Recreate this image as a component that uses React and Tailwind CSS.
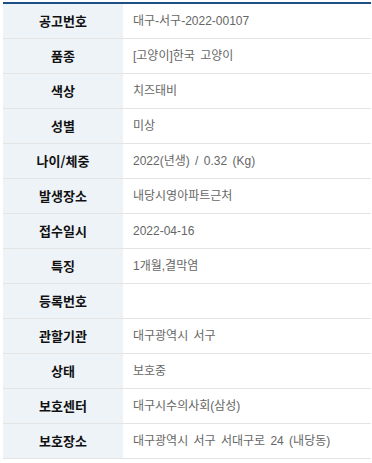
const rows = [
  ['공고번호', '대구-서구-2022-00107'],
  ['품종', '[고양이]한국 고양이'],
  ['색상', '치즈태비'],
  ['성별', '미상'],
  ['나이/체중', '2022(년생) / 0.32 (Kg)'],
  ['발생장소', '내당시영아파트근처'],
  ['접수일시', '2022-04-16'],
  ['특징', '1개월,결막염'],
  ['등록번호', ''],
  ['관할기관', '대구광역시 서구'],
  ['상태', '보호중'],
  ['보호센터', '대구시수의사회(삼성)'],
  ['보호장소', '대구광역시 서구 서대구로 24 (내당동)'],
];

export default function App() {
  return (
    <div className="bg-white w-[372px] h-[463px] pt-[2px] pl-[3px]">
      <div className="w-[368px] border-t-2 border-[#1e4f84]">
        {rows.map(([label, value]) => (
          <div key={label} className="flex h-[35px] border-b border-[#e4e4e4]">
            <div className="w-[120px] shrink-0 bg-[#eef3f8] flex items-center justify-center text-[13px] font-bold text-[#111] font-['Noto_Sans_CJK_KR',sans-serif]">
              {label}
            </div>
            <div className="flex-1 flex items-center pl-[10px] text-[12px] text-[#666] [word-spacing:2px] font-['Liberation_Sans','Noto_Sans_CJK_KR',sans-serif]">
              {value}
            </div>
          </div>
        ))}
      </div>
    </div>
  );
}
